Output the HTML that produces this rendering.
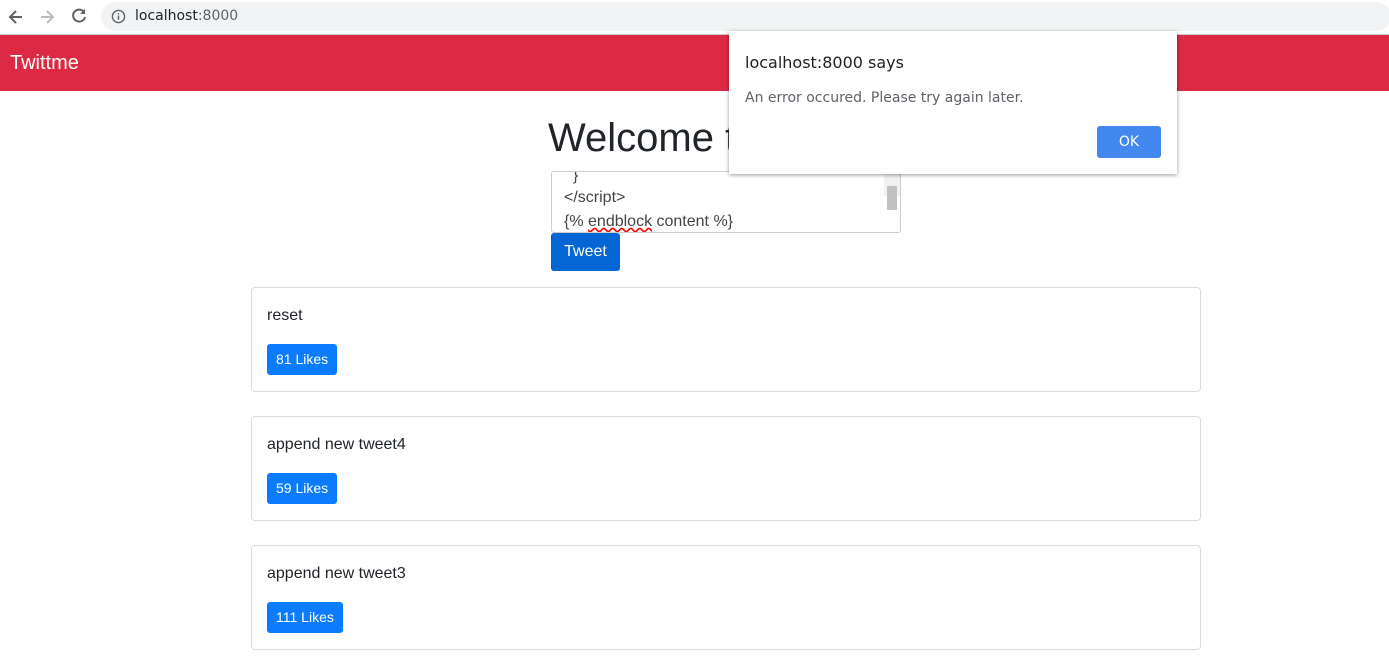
<!DOCTYPE html>
<html><head><meta charset="utf-8"><style>
*{box-sizing:border-box;margin:0;padding:0}
body{width:1389px;height:671px;overflow:hidden;background:#fff;font-family:"Liberation Sans",Arial,sans-serif;position:relative;color:#212529}
.top{height:35px;background:#fff;border-bottom:1px solid #ccc;position:relative}
.url{position:absolute;left:101px;top:2px;width:1290px;height:29px;background:#f1f3f4;border-radius:15px}
.url span{position:absolute;left:34px;top:6px;font-family:"DejaVu Sans",sans-serif;font-size:14px;color:#202124}
.url span b{font-weight:normal;color:#5f6368}
.nav{height:56px;background:#dc2a44;color:#fff;font-size:20px;padding:17px 0 0 10px}
h1{position:absolute;left:548px;top:116px;font-size:40px;font-weight:normal;color:#212529}
.ta{position:absolute;left:551px;top:171px;width:350px;height:62px;border:1px solid #ccc;border-radius:3px;overflow:hidden;font-size:16px;color:#444;padding:0 0 0 12px}
.ta div{height:24px;line-height:24px}
.sb{position:absolute;right:0;top:0;width:16px;height:61px;background:#f1f1f1}
.thumb{position:absolute;right:3px;top:14px;width:10px;height:16px;background:#c1c1c1}
.btn{position:absolute;left:551px;top:233px;width:69px;height:38px;background:#0466d4;color:#fff;border-radius:3px;font-size:16px;text-align:center;line-height:37px}
.card{position:absolute;left:251px;width:950px;height:105px;border:1px solid #dcdcdc;border-radius:4px}
.card p{position:absolute;left:15px;top:19px;font-size:16px}
.card a{position:absolute;left:15px;top:56px;height:31px;background:#0a7cfd;color:#fff;font-size:14px;padding:0 9px;line-height:31px;border-radius:3px}
.dlg{position:absolute;left:729px;top:31px;width:448px;height:143px;background:#fff;box-shadow:0 1px 4px rgba(0,0,0,.4);font-family:"DejaVu Sans",sans-serif}
.dlg .t{position:absolute;left:16px;top:22px;font-size:16px;color:#202124}
.dlg .m{position:absolute;left:16px;top:59px;font-size:14px;color:#5f6368}
.dlg .ok{position:absolute;left:368px;top:95px;width:64px;height:32px;background:#4388ee;color:#fff;border-radius:3px;font-size:14px;text-align:center;line-height:32px}
</style></head><body>
<div class="top">
<svg style="position:absolute;left:6px;top:7px" width="20" height="20" viewBox="0 0 20 20"><path d="M16 10H4M10 4l-6 6 6 6" stroke="#5f6368" stroke-width="2" fill="none"/></svg>
<svg style="position:absolute;left:37px;top:7px" width="20" height="20" viewBox="0 0 20 20"><path d="M4 10h12M10 4l6 6-6 6" stroke="#bbb" stroke-width="2" fill="none"/></svg>
<svg style="position:absolute;left:69px;top:6px" width="20" height="20" viewBox="0 0 20 20"><path d="M15 6A6 6 0 1 0 16 11" stroke="#5f6368" stroke-width="2" fill="none"/><path d="M16 3v5h-5z" fill="#5f6368"/></svg>
<div class="url"><svg style="position:absolute;left:10px;top:7px" width="15" height="15" viewBox="0 0 16 16"><circle cx="8" cy="8" r="6.5" stroke="#5f6368" stroke-width="1.5" fill="none"/><path d="M8 7v4.5M8 4.5v1.3" stroke="#5f6368" stroke-width="1.6"/></svg><span>localhost<b>:8000</b></span></div>
</div>
<div class="nav">Twittme</div>
<h1>Welcome to Twittme</h1>
<div class="ta"><div style="height:14px;line-height:8px">&nbsp;&nbsp;}</div><div>&lt;/script&gt;</div><div>{% <u style="text-decoration:underline wavy red">endblock</u> content %}</div><div class="sb"><div class="thumb"></div></div></div>
<div class="btn">Tweet</div>
<div class="card" style="top:287px"><p>reset</p><a>81 Likes</a></div>
<div class="card" style="top:416px"><p>append new tweet4</p><a>59 Likes</a></div>
<div class="card" style="top:545px"><p>append new tweet3</p><a>111 Likes</a></div>
<div class="dlg"><div class="t">localhost:8000 says</div><div class="m">An error occured. Please try again later.</div><div class="ok">OK</div></div>
</body></html>
